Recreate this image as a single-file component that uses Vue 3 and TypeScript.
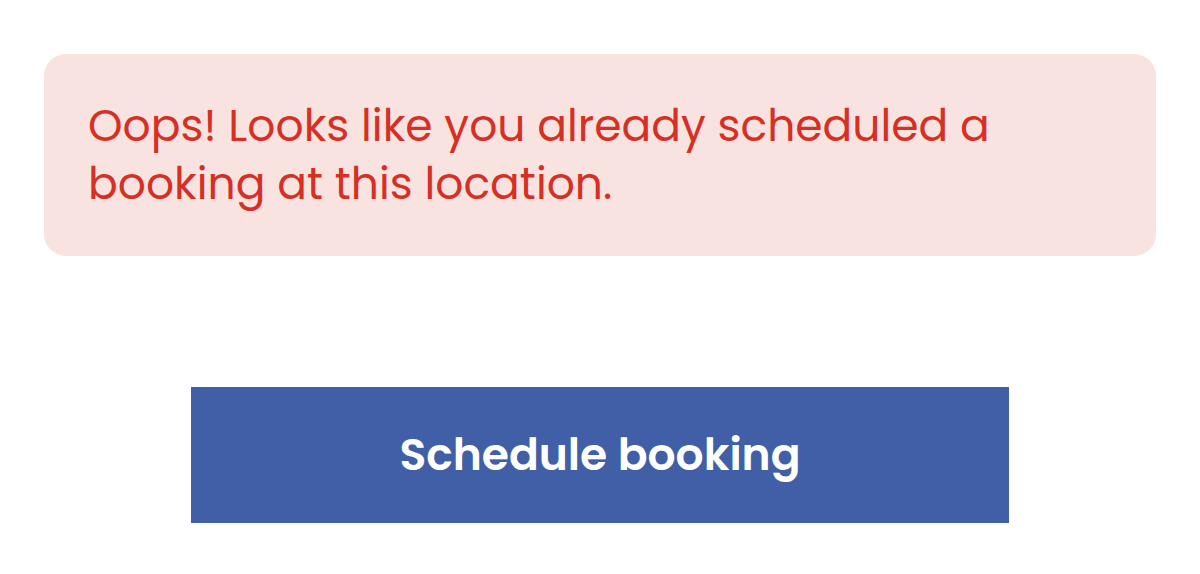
<script setup lang="ts">
const message: string = 'Oops! Looks like you already scheduled a booking at this location.'
const action: string = 'Schedule booking'
</script>

<template>
  <main class="page">
    <p class="alert" role="alert">{{ message }}</p>
    <button class="submit" type="button">{{ action }}</button>
  </main>
</template>

<style>
body {
  margin: 0;
  background: #ffffff;
}
</style>

<style scoped>
.page {
  display: flex;
  flex-direction: column;
  align-items: center;
  gap: 131px;
  padding: 54px 44px 51px;
  font-family: Poppins, Inter, sans-serif;
}

.alert {
  box-sizing: border-box;
  width: 100%;
  margin: 0;
  padding: 43px 44px;
  border-radius: 22px;
  background: #f9e3e1;
  color: #d63024;
  font-size: 44px;
  line-height: 58px;
}

.submit {
  width: 100%;
  max-width: 818px;
  padding: 39px 24px;
  border: 0;
  background: #405fa6;
  color: #ffffff;
  font-family: inherit;
  font-size: 44px;
  font-weight: 600;
  line-height: 58px;
  cursor: pointer;
}
</style>
